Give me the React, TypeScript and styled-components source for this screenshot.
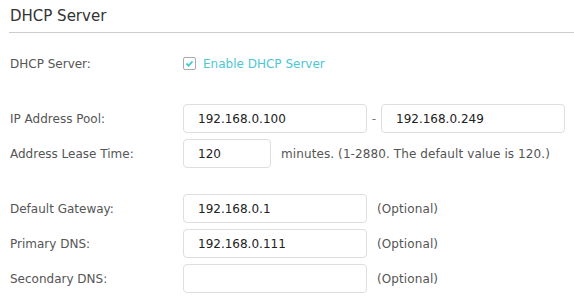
import styled, { createGlobalStyle } from "styled-components"

const GlobalStyle = createGlobalStyle`
  body {
    margin: 0;
    background: #fff;
    font-family: "DejaVu Sans", Verdana, sans-serif;
  }
`

const Page = styled.div`
  padding: 0 0 0 9px;
  width: 574px;
  box-sizing: border-box;
`

const Title = styled.h2`
  margin: 0;
  padding: 7px 0 0 1px;
  height: 25px;
  font-size: 15px;
  font-weight: normal;
  color: #333;
  border-bottom: 1px solid #ccc;
`

const Form = styled.div`
  padding: 16px 0 0 1px;
  display: flex;
  flex-direction: column;
  gap: 26px;
`

const Group = styled.div`
  display: flex;
  flex-direction: column;
  gap: 6px;
`

const Row = styled.div`
  display: grid;
  grid-template-columns: 173px 1fr;
  align-items: center;
  min-height: 29px;
`

const Label = styled.span`
  font-size: 12px;
  color: #555;
`

const Field = styled.div`
  display: flex;
  align-items: center;
`

const Input = styled.input<{ $w?: number }>`
  box-sizing: border-box;
  width: ${(p) => p.$w ?? 184}px;
  height: 29px;
  padding: 0 14px;
  border: 1px solid #dedede;
  border-radius: 4px;
  font-family: inherit;
  font-size: 12px;
  color: #222;
  outline: none;
`

const Dash = styled.span`
  width: 14px;
  text-align: center;
  font-size: 12px;
  color: #777;
`

const Note = styled.span`
  margin-left: 10px;
  font-size: 12px;
  letter-spacing: 0.1px;
  color: #555;
`

const Check = styled.label`
  display: flex;
  align-items: center;
  gap: 7px;
  font-size: 12px;
  color: #4cc7d4;
`

const Box = styled.span`
  width: 11px;
  height: 11px;
  border: 1px solid #aaa;
  border-radius: 2px;
  display: flex;
  align-items: center;
  justify-content: center;
`

const App = () => {
  return (
    <Page>
      <GlobalStyle />
      <Title>DHCP Server</Title>
      <Form>
        <Row>
          <Label>DHCP Server:</Label>
          <Check>
            <Box>
              <svg width="9" height="9" viewBox="0 0 9 9">
                <path d="M1.5 4.5 L3.6 6.6 L7.5 2.4" fill="none" stroke="#4cc7d4" strokeWidth="1.8" />
              </svg>
            </Box>
            Enable DHCP Server
          </Check>
        </Row>
        <Group>
          <Row>
            <Label>IP Address Pool:</Label>
            <Field>
              <Input defaultValue="192.168.0.100" />
              <Dash>-</Dash>
              <Input defaultValue="192.168.0.249" />
            </Field>
          </Row>
          <Row>
            <Label>Address Lease Time:</Label>
            <Field>
              <Input $w={88} defaultValue="120" />
              <Note>minutes. (1-2880. The default value is 120.)</Note>
            </Field>
          </Row>
        </Group>
        <Group>
          <Row>
            <Label>Default Gateway:</Label>
            <Field>
              <Input defaultValue="192.168.0.1" />
              <Note>(Optional)</Note>
            </Field>
          </Row>
          <Row>
            <Label>Primary DNS:</Label>
            <Field>
              <Input defaultValue="192.168.0.111" />
              <Note>(Optional)</Note>
            </Field>
          </Row>
          <Row>
            <Label>Secondary DNS:</Label>
            <Field>
              <Input defaultValue="" />
              <Note>(Optional)</Note>
            </Field>
          </Row>
        </Group>
      </Form>
    </Page>
  )
}

export default App
